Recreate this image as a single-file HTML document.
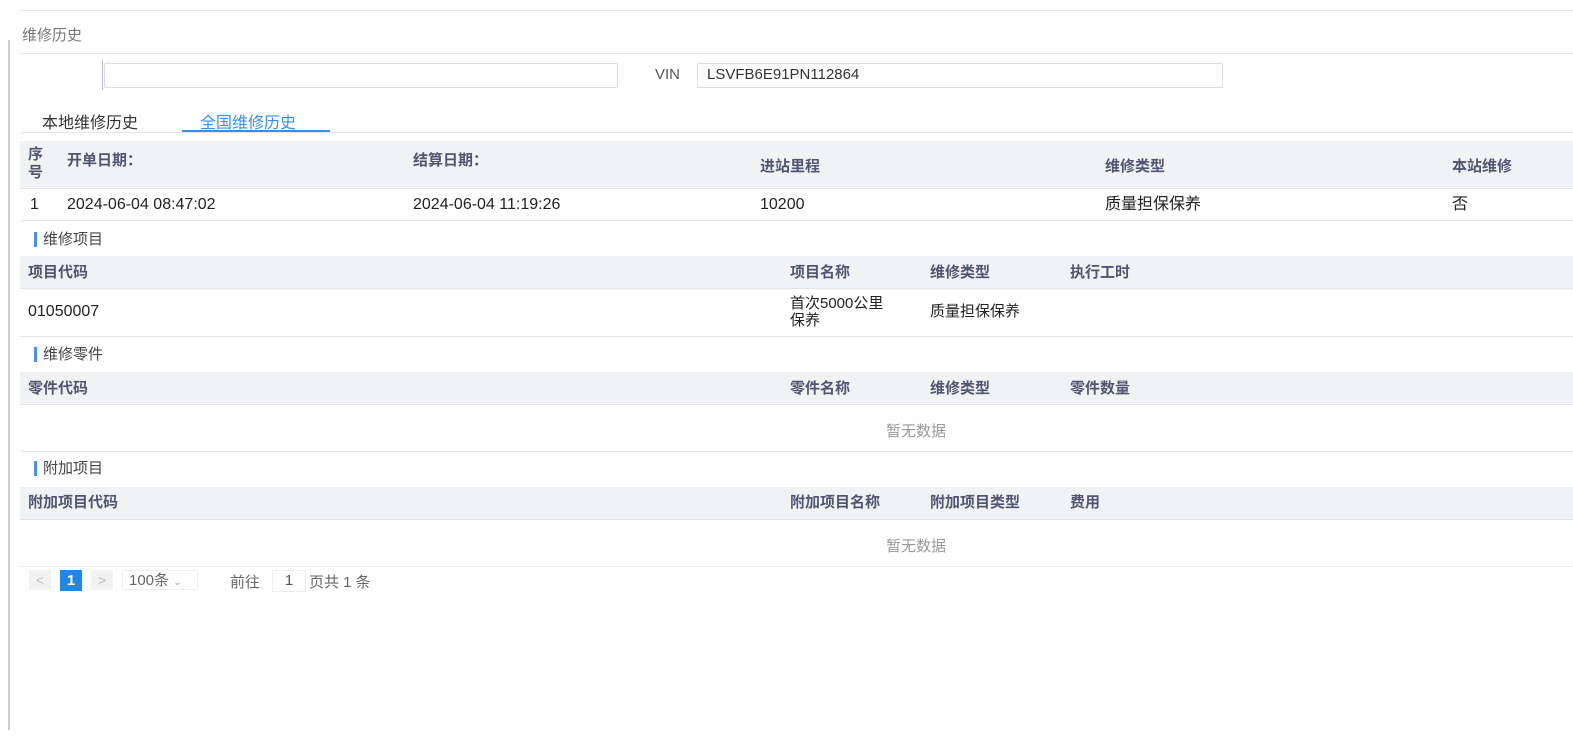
<!DOCTYPE html>
<html><head><meta charset="utf-8"><style>
body{margin:0;width:1573px;height:737px;background:#fff;font-family:"Liberation Sans","Noto Sans CJK SC",sans-serif;position:relative;overflow:hidden;color:#222}
.a{position:absolute;white-space:nowrap}
.line{position:absolute;height:1px;background:#e4e6ea}
.hd{position:absolute;left:20px;right:0;background:#f1f2f4;border-bottom:1px solid #e2e4e8}
.h{position:absolute;font-size:15px;font-weight:bold;color:#4f5672;white-space:nowrap;line-height:20px}
.c{position:absolute;font-size:16px;color:#222;white-space:nowrap;line-height:20px;height:20px}
.sec{position:absolute;left:34px;font-size:15px;color:#444;padding-left:6px;border-left:3px solid #4c8ff0;line-height:15px}
.empty{position:absolute;left:886px;font-size:15px;color:#999}
</style></head><body>
<div style="position:absolute;left:8px;top:40px;width:2px;height:690px;background:#ccc"></div>
<div class="line" style="left:20px;right:0;top:10px"></div>
<div class="a" style="left:22px;top:24px;font-size:15px;color:#777">维修历史</div>
<div class="line" style="left:20px;right:0;top:53px"></div>
<div style="position:absolute;left:102px;top:60px;width:1px;height:30px;background:#bbc"></div>
<div style="position:absolute;left:104px;top:63px;width:512px;height:23px;border:1px solid #ddd;border-radius:2px"></div>
<div class="a" style="left:655px;top:66px;font-size:15px;color:#555">VIN</div>
<div style="position:absolute;left:697px;top:63px;width:524px;height:23px;border:1px solid #ddd;border-radius:2px"></div>
<div class="a" style="left:707px;top:66px;font-size:15px;color:#333">LSVFB6E91PN112864</div>
<div class="a" style="left:42px;top:109px;font-size:16px;color:#333">本地维修历史</div>
<div class="a" style="left:200px;top:109px;font-size:16px;color:#3a8ee6">全国维修历史</div>
<div class="line" style="left:20px;right:0;top:132px"></div>
<div style="position:absolute;left:182px;top:130px;width:148px;height:2px;background:#3a8ee6"></div>

<div class="hd" style="top:141px;height:47px"></div>
<div class="h" style="left:28px;top:146px;line-height:18px">序<br>号</div>
<div class="h" style="left:67px;top:151px">开单日期：</div>
<div class="h" style="left:413px;top:151px">结算日期：</div>
<div class="h" style="left:760px;top:157px">进站里程</div>
<div class="h" style="left:1105px;top:157px">维修类型</div>
<div class="h" style="left:1452px;top:157px">本站维修</div>
<div class="c" style="left:30px;top:195px">1</div>
<div class="c" style="left:67px;top:195px">2024-06-04 08:47:02</div>
<div class="c" style="left:413px;top:195px">2024-06-04 11:19:26</div>
<div class="c" style="left:760px;top:195px">10200</div>
<div class="c" style="left:1105px;top:195px">质量担保保养</div>
<div class="c" style="left:1452px;top:195px">否</div>
<div class="line" style="left:20px;right:0;top:220px"></div>

<div class="sec" style="top:232px">维修项目</div>
<div class="hd" style="top:256px;height:32px"></div>
<div class="h" style="left:28px;top:263px">项目代码</div>
<div class="h" style="left:790px;top:263px">项目名称</div>
<div class="h" style="left:930px;top:263px">维修类型</div>
<div class="h" style="left:1070px;top:263px">执行工时</div>
<div class="c" style="left:28px;top:302px">01050007</div>
<div class="c" style="left:790px;top:295px;line-height:17px;font-size:15px;height:auto">首次5000公里<br>保养</div>
<div class="c" style="left:930px;top:302px;font-size:15px">质量担保保养</div>
<div class="line" style="left:20px;right:0;top:336px"></div>

<div class="sec" style="top:347px">维修零件</div>
<div class="hd" style="top:372px;height:32px"></div>
<div class="h" style="left:28px;top:379px">零件代码</div>
<div class="h" style="left:790px;top:379px">零件名称</div>
<div class="h" style="left:930px;top:379px">维修类型</div>
<div class="h" style="left:1070px;top:379px">零件数量</div>
<div class="empty" style="top:420px">暂无数据</div>
<div class="line" style="left:20px;right:0;top:451px"></div>

<div class="sec" style="top:461px">附加项目</div>
<div class="hd" style="top:487px;height:32px"></div>
<div class="h" style="left:28px;top:493px">附加项目代码</div>
<div class="h" style="left:790px;top:493px">附加项目名称</div>
<div class="h" style="left:930px;top:493px">附加项目类型</div>
<div class="h" style="left:1070px;top:493px">费用</div>
<div class="empty" style="top:535px">暂无数据</div>
<div class="line" style="left:20px;right:0;top:566px"></div>

<div style="position:absolute;left:29px;top:570px;width:22px;height:20px;background:#f2f2f2;color:#bbb;font-size:14px;text-align:center;line-height:20px">&lt;</div>
<div style="position:absolute;left:60px;top:570px;width:22px;height:21px;background:#1e88e5;color:#fff;font-size:15px;font-weight:bold;text-align:center;line-height:21px">1</div>
<div style="position:absolute;left:91px;top:570px;width:22px;height:20px;background:#f2f2f2;color:#bbb;font-size:14px;text-align:center;line-height:20px">&gt;</div>
<div style="position:absolute;left:122px;top:570px;width:76px;height:20px;border:1px solid #eee;font-size:15px;color:#666;line-height:20px;padding-left:6px;box-sizing:border-box">100条 <span style="font-size:10px;color:#aaa">⌄</span></div>
<div class="a" style="left:230px;top:571px;font-size:15px;color:#666">前往</div>
<div style="position:absolute;left:272px;top:570px;width:32px;height:20px;border:1px solid #eee;font-size:15px;color:#555;text-align:center;line-height:20px">1</div>
<div class="a" style="left:309px;top:571px;font-size:15px;color:#666">页共 1 条</div>
</body></html>
